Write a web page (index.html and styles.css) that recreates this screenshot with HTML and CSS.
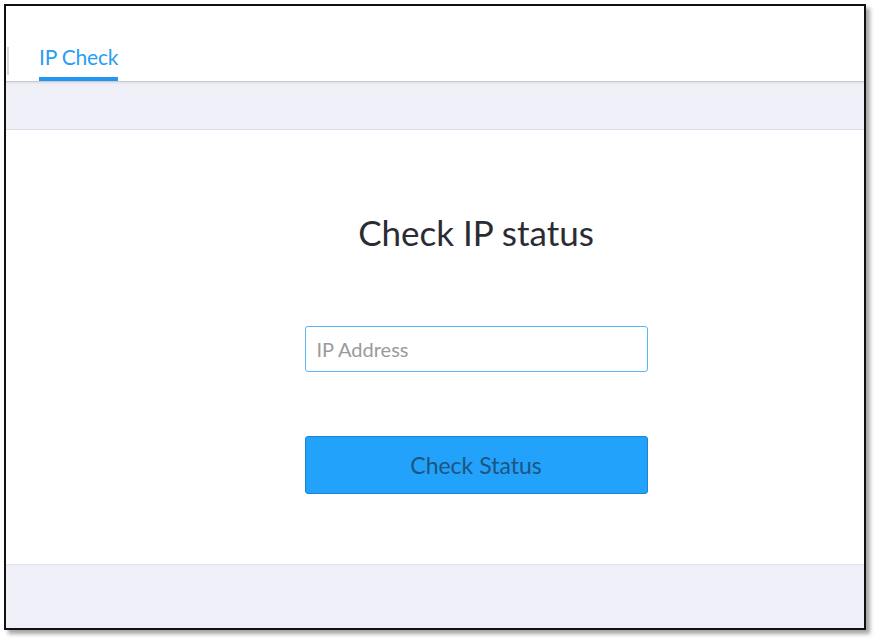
FILE: index.html
```html
<!DOCTYPE html>
<html>
<head>
<meta charset="utf-8">
<link rel="stylesheet" href="styles.css">
</head>
<body>
<div class="frame">
  <header class="topbar">
    <span class="edge"></span>
    <nav class="tabs">
      <a class="tab active">IP Check</a>
    </nav>
  </header>
  <div class="band"></div>
  <main class="main">
    <h1 class="title">Check IP status</h1>
    <input class="ip-input" type="text" placeholder="IP Address">
    <button class="btn">Check Status</button>
  </main>
  <footer class="footer"></footer>
</div>
</body>
</html>
```

FILE: styles.css
```css
html, body {
  margin: 0;
  padding: 0;
  background: #ffffff;
}
body {
  font-family: "Lato", "Open Sans", sans-serif;
  width: 880px;
  height: 644px;
  overflow: hidden;
}
.frame {
  margin: 4px 0 0 4px;
  width: 858px;
  height: 622px;
  border: 2px solid #111;
  box-shadow: 4px 4px 4px rgba(0,0,0,0.35);
  display: flex;
  flex-direction: column;
  background: #fff;
}
.topbar {
  height: 75px;
  display: flex;
  align-items: flex-end;
  border-bottom: 1px solid #c9c9ce;
  box-shadow: 0 1px 2px rgba(0,0,0,0.08);
  position: relative;
  z-index: 1;
}
.edge {
  width: 2px;
  height: 28px;
  margin-left: 1px;
  margin-bottom: 6px;
  background: #d8d8d8;
}
.tabs {
  display: flex;
  margin-left: 30px;
}
.tab {
  font-size: 21px;
  color: #2a9df4;
  padding-bottom: 8px;
  border-bottom: 4px solid #2196f3;
  line-height: 24px;
  letter-spacing: -0.2px;
}
.band {
  height: 47px;
  background: #efeff7;
  border-bottom: 1px solid #dedee8;
}
.main {
  flex: 1;
  display: flex;
  flex-direction: column;
  align-items: center;
  padding-left: 82px;
  border-bottom: 1px solid #e3e3ec;
}
.title {
  margin: 82px 0 0 0;
  font-weight: 400;
  font-size: 35px;
  line-height: 40px;
  color: #2b2b33;
}
.ip-input {
  margin-top: 74px;
  box-sizing: border-box;
  width: 343px;
  height: 46px;
  border: 1px solid #58b6f6;
  border-radius: 3px;
  padding: 0 11px;
  font-family: inherit;
  font-size: 20px;
  color: #333;
  outline: none;
}
.ip-input::placeholder {
  color: #9a9a9a;
}
.btn {
  margin-top: 64px;
  box-sizing: border-box;
  width: 343px;
  height: 58px;
  background: #22a2fb;
  border: 1px solid #1a86d2;
  border-radius: 3px;
  font-family: inherit;
  font-size: 23px;
  color: #1d5580;
  cursor: pointer;
}
.footer {
  height: 63px;
  background: #efeff8;
}
```
